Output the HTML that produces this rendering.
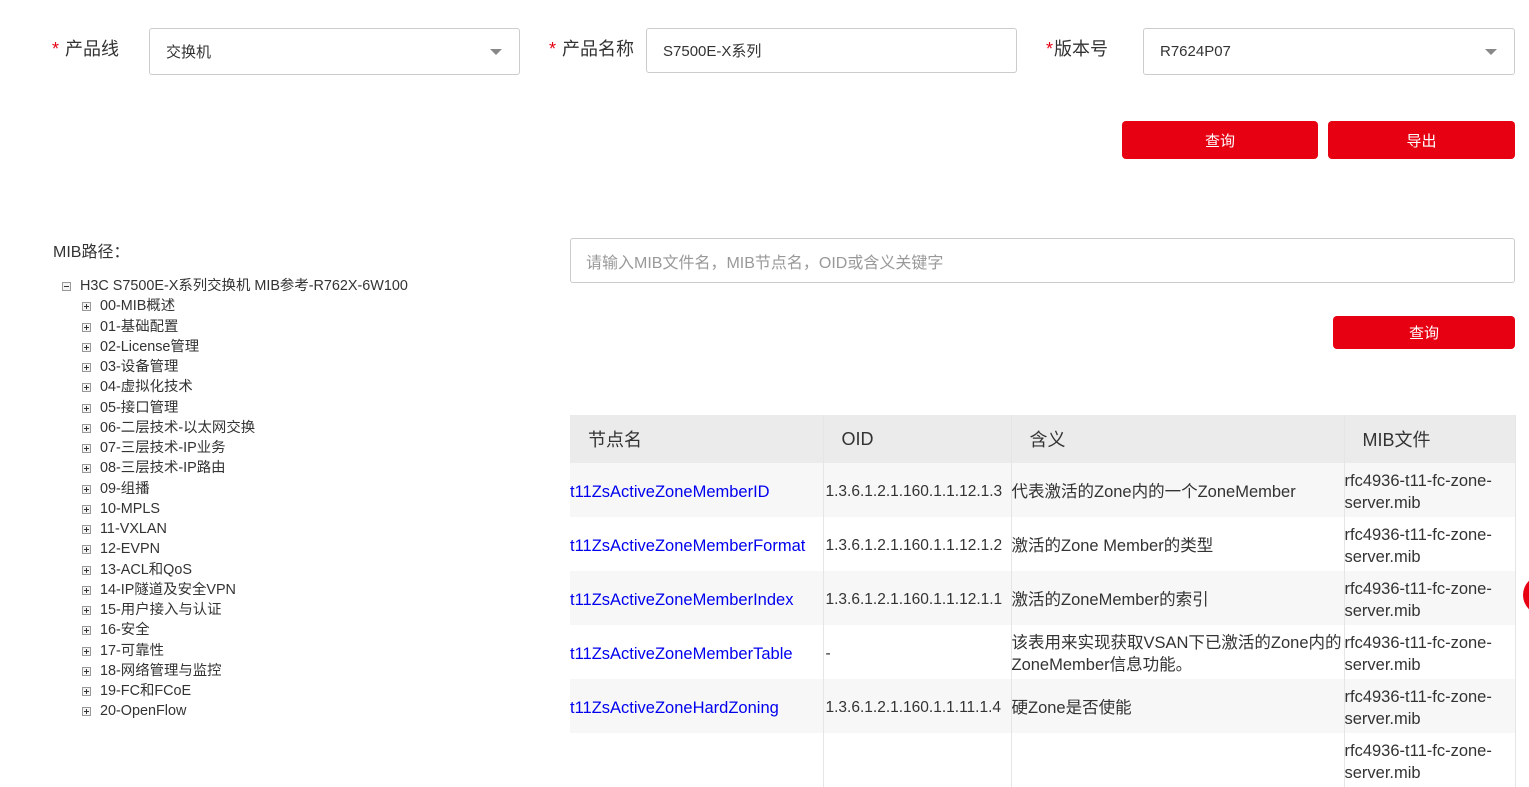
<!DOCTYPE html>
<html><head><meta charset="utf-8"><style>
*{box-sizing:border-box;margin:0;padding:0}
body{width:1529px;height:753px;overflow:hidden;background:#fff;font-family:"Liberation Sans","Noto Sans CJK SC",sans-serif;color:#333;position:relative}
.a{position:absolute}
.lbl{font-size:18px;color:#333}
.lbl b{color:#e60012;font-weight:normal;margin-right:6px}
.box{border:1px solid #ccc;border-radius:3px;font-size:15px;padding-left:16px;display:flex;align-items:center}
.tri{position:absolute;right:17px;top:20px;width:0;height:0;border-left:6px solid transparent;border-right:6px solid transparent;border-top:6px solid #888}
.btn{background:#e60012;color:#fff;border-radius:4px;font-size:15px;display:flex;align-items:center;justify-content:center}
.tree{font-size:14.4px;color:#333;line-height:20.25px}
.pl{display:inline-block;width:9px;height:9px;border:1px solid #999;background:#f4f4f4;position:relative;margin-right:9px;vertical-align:-1px}
.pl:before{content:"";position:absolute;left:1px;top:3px;width:5px;height:1px;background:#333}
.pl.p:after{content:"";position:absolute;left:3px;top:1px;width:1px;height:5px;background:#333}
table{border-collapse:collapse;font-size:16.5px;table-layout:fixed}
td,th{border-right:1px solid #e5e5e5;padding:0;text-align:left;font-weight:normal;vertical-align:middle;overflow:visible;white-space:nowrap}
th{background:#ebebeb;height:48px;font-size:18px;color:#333;padding-left:18px}
td{height:54px;line-height:22px;padding-top:3px}
td.o{padding-left:2px;font-size:15.5px}
tr.g td{background:#f7f7f7}
td.n{color:#0000ee}
</style></head><body>
<div class="a lbl" style="left:52px;top:35px"><b>*</b>产品线</div>
<div class="a box" style="left:149px;top:28px;width:371px;height:47px">交换机<span class="tri"></span></div>
<div class="a lbl" style="left:549px;top:35px"><b>*</b>产品名称</div>
<div class="a box" style="left:646px;top:28px;width:371px;height:45px">S7500E-X系列</div>
<div class="a lbl" style="left:1046px;top:35px"><b style="margin-right:1px">*</b>版本号</div>
<div class="a box" style="left:1143px;top:28px;width:372px;height:47px">R7624P07<span class="tri"></span></div>
<div class="a btn" style="left:1122px;top:121px;width:196px;height:38px">查询</div>
<div class="a btn" style="left:1328px;top:121px;width:187px;height:38px">导出</div>
<div class="a" style="left:53px;top:238px;font-size:16px">MIB路径：</div>
<div class="a tree" style="left:62px;top:276px">
<div><span class="pl"></span>H3C S7500E-X系列交换机 MIB参考-R762X-6W100</div>
<div style="padding-left:20px">
<div><span class="pl p"></span>00-MIB概述</div><div><span class="pl p"></span>01-基础配置</div><div><span class="pl p"></span>02-License管理</div><div><span class="pl p"></span>03-设备管理</div><div><span class="pl p"></span>04-虚拟化技术</div><div><span class="pl p"></span>05-接口管理</div><div><span class="pl p"></span>06-二层技术-以太网交换</div><div><span class="pl p"></span>07-三层技术-IP业务</div><div><span class="pl p"></span>08-三层技术-IP路由</div><div><span class="pl p"></span>09-组播</div><div><span class="pl p"></span>10-MPLS</div><div><span class="pl p"></span>11-VXLAN</div><div><span class="pl p"></span>12-EVPN</div><div><span class="pl p"></span>13-ACL和QoS</div><div><span class="pl p"></span>14-IP隧道及安全VPN</div><div><span class="pl p"></span>15-用户接入与认证</div><div><span class="pl p"></span>16-安全</div><div><span class="pl p"></span>17-可靠性</div><div><span class="pl p"></span>18-网络管理与监控</div><div><span class="pl p"></span>19-FC和FCoE</div><div><span class="pl p"></span>20-OpenFlow</div>
</div></div>
<div class="a box" style="left:570px;top:238px;width:945px;height:45px;color:#999;font-size:16px;padding-left:15px">请输入MIB文件名，MIB节点名，OID或含义关键字</div>
<div class="a btn" style="left:1333px;top:316px;width:182px;height:33px">查询</div>
<table class="a" style="left:570px;top:415px;width:945px">
<colgroup><col style="width:253px"><col style="width:188px"><col style="width:333px"><col style="width:171px"></colgroup>
<tr><th>节点名</th><th>OID</th><th>含义</th><th>MIB文件</th></tr>
<tr class="g"><td class="n">t11ZsActiveZoneMemberID</td><td class="o">1.3.6.1.2.1.160.1.1.12.1.3</td><td>代表激活的Zone内的一个ZoneMember</td><td>rfc4936-t11-fc-zone-<br>server.mib</td></tr>
<tr><td class="n">t11ZsActiveZoneMemberFormat</td><td class="o">1.3.6.1.2.1.160.1.1.12.1.2</td><td>激活的Zone Member的类型</td><td>rfc4936-t11-fc-zone-<br>server.mib</td></tr>
<tr class="g"><td class="n">t11ZsActiveZoneMemberIndex</td><td class="o">1.3.6.1.2.1.160.1.1.12.1.1</td><td>激活的ZoneMember的索引</td><td>rfc4936-t11-fc-zone-<br>server.mib</td></tr>
<tr><td class="n">t11ZsActiveZoneMemberTable</td><td class="o">-</td><td>该表用来实现获取VSAN下已激活的Zone内的<br>ZoneMember信息功能。</td><td>rfc4936-t11-fc-zone-<br>server.mib</td></tr>
<tr class="g"><td class="n">t11ZsActiveZoneHardZoning</td><td class="o">1.3.6.1.2.1.160.1.1.11.1.4</td><td>硬Zone是否使能</td><td>rfc4936-t11-fc-zone-<br>server.mib</td></tr>
<tr><td></td><td></td><td></td><td>rfc4936-t11-fc-zone-<br>server.mib</td></tr>
</table>
<div class="a" style="left:1523px;top:575px;width:40px;height:40px;border-radius:50%;background:#e60012"></div>
</body></html>
